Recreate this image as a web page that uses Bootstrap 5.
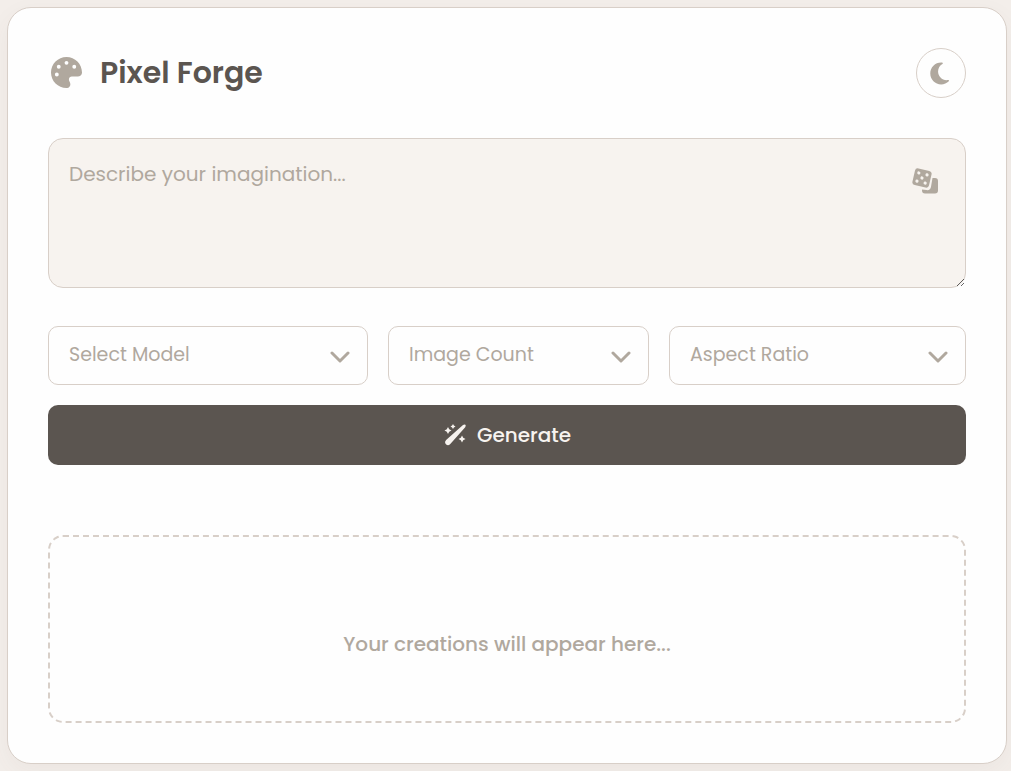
<!DOCTYPE html>
<html lang="en">
<head>
<meta charset="utf-8">
<meta name="viewport" content="width=device-width, initial-scale=1">
<title>Pixel Forge</title>
<link href="https://cdn.jsdelivr.net/npm/bootstrap@5.3.0/dist/css/bootstrap.min.css" rel="stylesheet">
<style>
  :root { --ink: #5b5550; --muted: #b0a89e; --line: #d8cfc8; --cream: #f7f3ef; }
  body { font-family: Poppins, Inter, "Open Sans", sans-serif; color: var(--ink); background: #f3eeea; padding: 7px 4px 7px 7px; }
  .forge { border: 1px solid var(--line); border-radius: 24px; background: #fefefe; padding: 40px; box-shadow: 0 8px 24px rgba(91, 85, 81, .05); }
  .brand-title { font-size: 30px; line-height: 48px; font-weight: 600; }
  .brand-icon { color: var(--muted); margin: 0 18px 2px 3px; }
  .theme-btn { width: 50px; height: 50px; border: 1px solid var(--line); color: var(--muted); background: transparent; }
  .prompt-box { height: 150px; border: 1px solid var(--line); border-radius: 15px; background: var(--cream); padding: 20px 80px 20px 20px; font-size: 20px; line-height: 30px; resize: vertical; }
  .prompt-box::placeholder, .option-select { color: var(--muted); }
  .dice-btn { top: 26px; right: 22px; color: var(--muted); line-height: 0; }
  .options { grid-template-columns: 320fr 261fr 297fr; gap: 20px; margin: 38px 0 20px; }
  .option-select {
    height: 59px; border: 1px solid var(--line); border-radius: 10px; padding: 0 44px 0 20px; font-size: 19px;
    background: #fefefe url("data:image/svg+xml,%3Csvg xmlns='http://www.w3.org/2000/svg' viewBox='0 0 20 14'%3E%3Cpath d='M2 3l8 8 8-8' fill='none' stroke='%23b0a89e' stroke-width='3' stroke-linecap='round' stroke-linejoin='round'/%3E%3C/svg%3E") no-repeat right 17px top 23px / 20px 14px;
  }
  .generate-btn, .generate-btn:hover { height: 60px; gap: 10px; border: 0; border-radius: 10px; background: var(--ink); color: var(--cream); font-size: 20px; font-weight: 500; }
  .gallery { height: 188px; margin-top: 70px; padding-top: 30px; border: 2px dashed var(--line); border-radius: 15px; color: var(--muted); font-size: 20px; font-weight: 500; }
</style>
</head>
<body>
<main class="forge">
  <header class="d-flex align-items-center justify-content-between mb-4 pb-3">
    <div class="d-flex align-items-center">
      <svg class="brand-icon" width="31" height="31" viewBox="0 0 512 512" fill="currentColor" aria-hidden="true"><path d="M512 256c0 .9 0 1.800 0 2.700c-.4 36.500-33.600 61.300-70.100 61.300H344c-26.500 0-48 21.500-48 48c0 3.400.4 6.700 1 9.900c2.100 10.200 6.500 20 10.800 29.900c6.100 13.800 12.100 27.500 12.100 42c0 31.800-21.600 60.700-53.400 62c-3.500.1-7 .2-10.600.2C114.600 512 0 397.400 0 256S114.600 0 256 0S512 114.600 512 256zM128 288a32 32 0 1 0-64 0 32 32 0 1 0 64 0zm0-96a32 32 0 1 0 0-64 32 32 0 1 0 0 64zM288 96a32 32 0 1 0-64 0 32 32 0 1 0 64 0zm96 96a32 32 0 1 0 0-64 32 32 0 1 0 0 64z"/></svg>
      <h1 class="brand-title mb-0">Pixel Forge</h1>
    </div>
    <button type="button" class="theme-btn btn rounded-circle p-0 d-flex align-items-center justify-content-center" aria-label="Toggle dark theme">
      <svg width="22" height="25" viewBox="0 0 440 512" fill="currentColor" aria-hidden="true"><path d="M223.500 32C100 32 0 132.300 0 256S100 480 223.500 480c60.600 0 115.500-24.200 155.800-63.400c5-4.900 6.300-12.500 3.100-18.700s-10.100-9.700-17-8.500c-9.800 1.700-19.800 2.600-30.100 2.600c-96.900 0-175.500-78.800-175.500-176c0-65.800 36-123.100 89.300-153.300c6.100-3.500 9.200-10.500 7.700-17.300s-7.300-11.900-14.300-12.500c-6.300-.5-12.600-.8-19-.8z"/></svg>
    </button>
  </header>

  <form>
    <div class="position-relative">
      <textarea class="prompt-box form-control" placeholder="Describe your imagination..." aria-label="Image description"></textarea>
      <button type="button" class="dice-btn btn border-0 p-1 position-absolute" aria-label="Random prompt">
        <svg width="28" height="28" viewBox="0 0 28 28" aria-hidden="true">
          <path fill="currentColor" d="M20.500 10H23a3 3 0 0 1 3 3v9.500a3 3 0 0 1-3 3H13a3 3 0 0 1-3-3v-1l4.500.6a4 4 0 0 0 4.500-3.300z"/>
          <g transform="rotate(13 10 10)"><rect x="1.500" y="1.500" width="17" height="17" rx="3" fill="currentColor"/><g fill="#f7f3ef"><circle cx="5.800" cy="5.800" r="1.600"/><circle cx="14.200" cy="5.800" r="1.600"/><circle cx="10" cy="10" r="1.600"/><circle cx="5.800" cy="14.200" r="1.600"/><circle cx="14.200" cy="14.200" r="1.600"/></g></g>
        </svg>
      </button>
    </div>
    <div class="options d-grid">
      <select class="option-select form-select" aria-label="Model"><option>Select Model</option></select>
      <select class="option-select form-select" aria-label="Image count"><option>Image Count</option></select>
      <select class="option-select form-select" aria-label="Aspect ratio"><option>Aspect Ratio</option></select>
    </div>
    <button type="button" class="generate-btn btn w-100 d-flex align-items-center justify-content-center">
      <svg width="24" height="24" viewBox="0 0 24 24" fill="currentColor" aria-hidden="true"><path d="M20 2q1.600-1 2.400-.2t-.2 2.400L7.300 21q-2 2-3.800.8l-1-1q-1.300-1.800.6-3.800zM5 4l1.200 2.300L8.500 7.500 6.200 8.700 5 11 3.800 8.700 1.500 7.500 3.800 6.300zM10 1l.9 1.600 1.600.9-1.600.9L10 6l-.9-1.600-1.600-.9 1.600-.9zM19 12.500l1.200 2.300 2.300 1.200-2.300 1.200L19 19.500l-1.200-2.300-2.300-1.200 2.300-1.200z"/></svg>
      Generate
    </button>
  </form>

  <section class="gallery d-flex align-items-center justify-content-center">Your creations will appear here...</section>
</main>
<script src="https://cdn.jsdelivr.net/npm/bootstrap@5.3.0/dist/js/bootstrap.bundle.min.js"></script>
</body>
</html>
